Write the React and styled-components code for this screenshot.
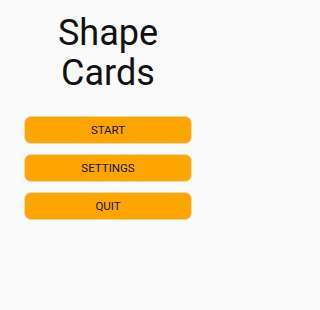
import React from "react";
import styled, { createGlobalStyle } from "styled-components";

const GlobalStyle = createGlobalStyle`
    html, body {
        margin: 0;
        padding: 0;
        background-color: #fafafa;
    }
`;

const Screen = styled.div`
    display: flex;
    flex-direction: column;
    align-items: center;
    width: 216px;
    height: 310px;
    padding-top: 13px;
    box-sizing: border-box;
    font-family: Roboto, "Noto Sans", sans-serif;
`;

const Title = styled.h1`
    margin: 0;
    font-size: 36px;
    font-weight: 400;
    line-height: 40px;
    text-align: center;
    color: #111;
`;

const Menu = styled.div`
    display: flex;
    flex-direction: column;
    gap: 10px;
    margin-top: 23px;
`;

const MenuButton = styled.button`
    width: 168px;
    height: 28px;
    padding: 0;
    border: 1px solid #f0d9a8;
    border-radius: 7px;
    background-color: #ffa500;
    color: #111;
    font-family: Roboto, "Noto Sans", sans-serif;
    font-size: 11.5px;
    font-weight: 400;
    text-transform: uppercase;
    cursor: pointer;
`;

const App = () => {
    const items = ["Start", "Settings", "Quit"];

    return (
        <>
            <GlobalStyle />
            <Screen>
                <Title>
                    Shape
                    <br />
                    Cards
                </Title>
                <Menu>
                    {items.map((item) => (
                        <MenuButton key={item} type="button">
                            {item}
                        </MenuButton>
                    ))}
                </Menu>
            </Screen>
        </>
    );
};

export default App;
